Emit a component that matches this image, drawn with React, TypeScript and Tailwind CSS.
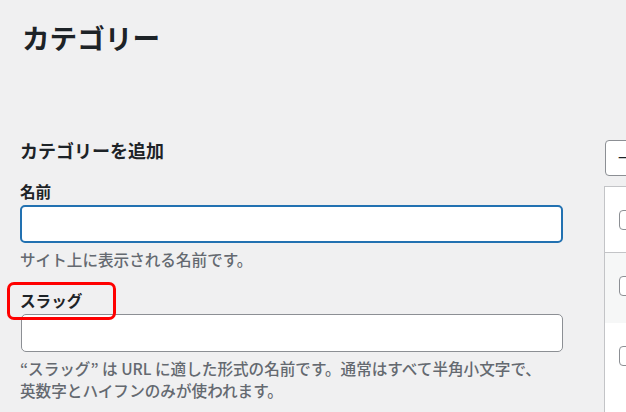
const rows = [
  { h: "h-[66px]", bg: "bg-white", border: "border-b border-[#c3c4c7]" },
  { h: "h-[70px]", bg: "bg-[#f6f7f7]", border: "" },
  { h: "h-[90px]", bg: "bg-white", border: "" },
];

export default function App() {
  return (
    <div className="w-[626px] h-[412px] overflow-hidden bg-[#f0f0f1] text-[#1d2327] font-['Noto_Sans_CJK_JP','Noto_Sans',sans-serif]">
      <div className="pl-5 pt-[17px]">
        <h1 className="text-[27.6px] font-semibold leading-[40px] pl-[2px]">カテゴリー</h1>

        <div className="flex mt-[81px]">
          {/* 左：新規追加フォーム */}
          <div className="w-[543px] shrink-0 relative">
            <h2 className="text-[18px] font-bold leading-[24px]">カテゴリーを追加</h2>

            <label className="block mt-[18px] text-[15.6px] font-bold leading-[22px]">名前</label>
            <div className="mt-[3px] h-[38px] rounded-[5px] border-2 border-[#2271b1] bg-white" />
            <p className="mt-[5px] text-[15.6px] font-medium leading-[22px] text-[#646970]">
              サイト上に表示される名前です。
            </p>

            <label className="block mt-[19px] text-[15.6px] font-bold leading-[22px]">スラッグ</label>
            <div className="mt-[3px] ml-px h-[38px] rounded-[5px] border border-[#8c8f94] bg-white" />
            <p className="mt-[5px] text-[15.6px] font-medium leading-[22px] text-[#646970] whitespace-nowrap">
              “スラッグ” は URL に適した形式の名前です。通常はすべて半角小文字で、
              <br />
              英数字とハイフンのみが使われます。
            </p>

            {/* 注釈の赤枠 */}
            <div className="absolute left-[-13px] top-[144px] w-[109px] h-[38px] rounded-[7px] border-[3px] border-[#ff0000]" />
          </div>

          {/* 右：一覧 */}
          <div className="ml-[41px] flex-1 min-w-0">
            <div className="ml-px mt-[2px] h-[36px] w-[140px] rounded-[4px] border border-[#8c8f94] bg-white pl-3 flex items-center text-[15.6px] whitespace-nowrap">
              一括操作
            </div>
            <div className="mt-[10px] border-l border-t border-[#c3c4c7] bg-white">
              {rows.map((r, i) => (
                <div key={i} className={`${r.h} ${r.bg} ${r.border} pl-[14px] pt-[23px]`}>
                  <div className="w-[20px] h-[20px] rounded-[4px] border border-[#8c8f94] bg-white" />
                </div>
              ))}
            </div>
          </div>
        </div>
      </div>
    </div>
  );
}
